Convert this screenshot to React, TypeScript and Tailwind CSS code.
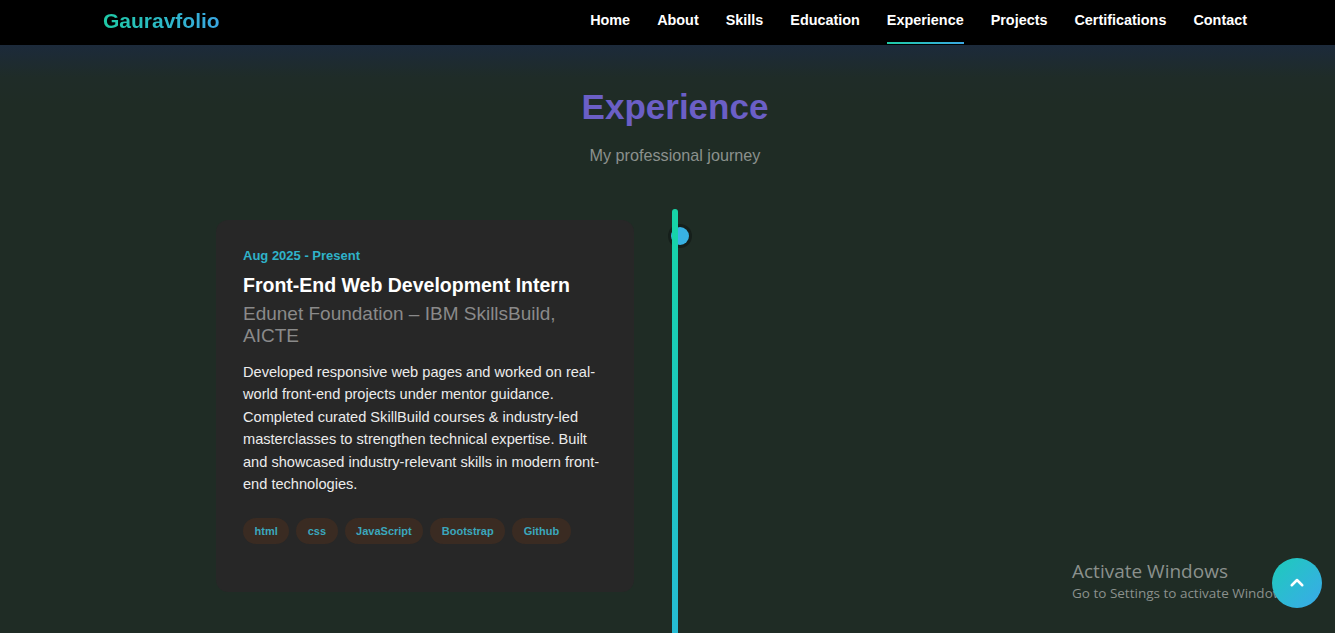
import React from 'react';

const navLinks = ['Home', 'About', 'Skills', 'Education', 'Experience', 'Projects', 'Certifications', 'Contact'];
const tags = ['html', 'css', 'JavaScript', 'Bootstrap', 'Github'];

const App = () => {
    return (
        <div className="relative h-[633px] overflow-hidden bg-[#1f2c25] pl-[15px] font-['Liberation_Sans',Arial,sans-serif]">
            {/* Navbar */}
            <nav className="-ml-[15px] bg-black pl-[15px]">
                <div className="mx-auto flex h-[45px] w-[1144px] items-center justify-between">
                    <span className="-mt-[4px] bg-gradient-to-r from-[#1fcaa6] to-[#3aa6e2] bg-clip-text text-[21px] font-bold text-transparent">
                        Gauravfolio
                    </span>
                    <ul className="flex h-full items-center gap-[27px]">
                        {navLinks.map((link) => (
                            <li key={link} className="relative flex h-full items-center pb-[4px] text-[14.4px] font-bold text-white">
                                {link}
                                {link === 'Experience' && (
                                    <span className="absolute bottom-[1px] left-0 h-[2px] w-full bg-gradient-to-r from-[#1fcaa6] to-[#3aa6e2]"></span>
                                )}
                            </li>
                        ))}
                    </ul>
                </div>
            </nav>

            {/* Section */}
            <section className="-ml-[15px] bg-[linear-gradient(180deg,#1c2a3b_0px,#1f2c28_32px,#1f2c25_60px)] pl-[15px] pt-[41px]">
                <div className="text-center">
                    <h2 className="text-[35px] font-bold leading-[42px] text-[#6b5fc6]">Experience</h2>
                    <p className="mt-[15px] text-[16.2px] leading-[24px] text-[#8b918d]">My professional journey</p>
                </div>

                {/* Timeline */}
                <div className="mx-auto mt-[42px] flex h-[460px] w-[918px]">
                    <div className="mt-[11px] h-[372px] w-[418px] rounded-xl bg-[#272727] px-[27px] pt-[28px]">
                        <p className="text-[13px] font-bold leading-[16px] text-[#2fb2c9]">Aug 2025 - Present</p>
                        <h3 className="mt-[9px] text-[19.5px] font-bold leading-[24px] text-white">Front-End Web Development Intern</h3>
                        <p className="mt-[6px] text-[19px] leading-[22px] text-[#8a8a8a]">Edunet Foundation – IBM SkillsBuild, AICTE</p>
                        <p className="mt-[14px] text-[14.6px] leading-[22.4px] text-[#ececec]">
                            Developed responsive web pages and worked on real-world front-end projects under mentor guidance. Completed curated SkillBuild courses &amp; industry-led masterclasses to strengthen technical expertise. Built and showcased industry-relevant skills in modern front-end technologies.
                        </p>
                        <div className="mt-[23px] flex gap-[7px]">
                            {tags.map((tag) => (
                                <span key={tag} className="flex h-[26px] items-center rounded-full bg-[#3a2b22] px-[11.5px] text-[11px] font-bold text-[#3aa7bd]">
                                    {tag}
                                </span>
                            ))}
                        </div>
                    </div>

                    <div className="relative ml-[38px] w-[6px]">
                        {/* Dot */}
                        <div className="absolute left-[-1px] top-[18px] h-[18px] w-[18px] rounded-full bg-[#38b2e4] shadow-[0_0_0_3px_#161f1b]"></div>
                        <div className="relative z-10 h-full w-full rounded-t-full bg-gradient-to-b from-[#16d4a6] to-[#27b9d8]"></div>
                    </div>
                </div>
            </section>

            {/* Windows watermark */}
            <div className="absolute left-[1072px] top-[558px] font-['Open_Sans','Noto_Sans',sans-serif] text-[#8b918d]">
                <p className="text-[19px] leading-[26px]">Activate Windows</p>
                <p className="text-[13.5px] leading-[19px]">Go to Settings to activate Windows.</p>
            </div>

            {/* Scroll to top */}
            <button className="absolute bottom-[25px] right-[13px] flex h-[50px] w-[50px] items-center justify-center rounded-full bg-gradient-to-br from-[#1ccbb9] to-[#3aa8ea]">
                <svg className="h-[18px] w-[18px]" viewBox="0 0 24 24" fill="none" stroke="white" strokeWidth={3.4} strokeLinecap="round" strokeLinejoin="round">
                    <path d="M5 15l7-7 7 7" />
                </svg>
            </button>
        </div>
    );
};

export default App;
